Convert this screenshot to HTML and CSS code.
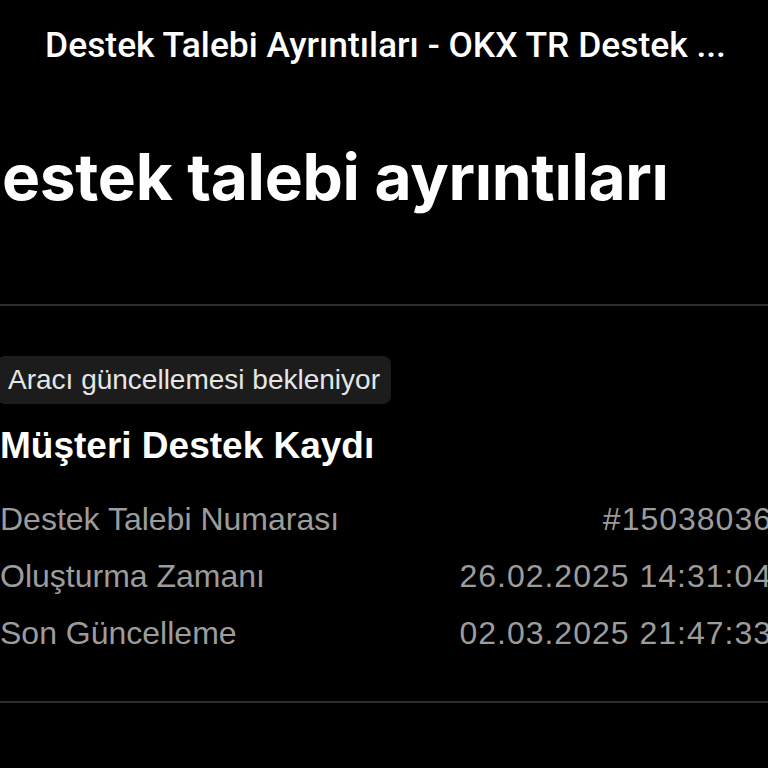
FILE: index.html
```html
<!DOCTYPE html>
<html lang="tr">
<head>
<meta charset="utf-8">
<link rel="stylesheet" href="styles.css">
</head>
<body>
<header class="topbar">
  <div class="topbar-title">Destek Talebi Ayrıntıları - OKX TR Destek ...</div>
</header>
<main class="page">
  <h1 class="page-title">Destek talebi ayrıntıları</h1>
  <hr class="divider">
  <section class="ticket">
    <div class="badge">Aracı güncellemesi bekleniyor</div>
    <h2 class="ticket-title">Müşteri Destek Kaydı</h2>
    <div class="rows">
      <div class="row"><span class="label">Destek Talebi Numarası</span><span class="value">#15038036</span></div>
      <div class="row"><span class="label">Oluşturma Zamanı</span><span class="value">26.02.2025 14:31:04</span></div>
      <div class="row"><span class="label">Son Güncelleme</span><span class="value">02.03.2025 21:47:33</span></div>
    </div>
  </section>
  <hr class="divider divider-bottom">
</main>
</body>
</html>
```
FILE: styles.css
```css
html, body {
  margin: 0;
  padding: 0;
  background: #000;
  overflow: hidden;
}
body {
  width: 768px;
  height: 768px;
  color: #fff;
  font-family: "Liberation Sans", Arial, sans-serif;
}
.topbar {
  height: 90px;
  display: flex;
  align-items: center;
  justify-content: center;
}
.topbar-title {
  font-family: Roboto, sans-serif;
  font-size: 35.4px;
  font-weight: 500;
  color: #fff;
  margin-left: 3px;
}
.page {
  width: 772px;
}
.page-title {
  margin: 47px 0 0 -44px;
  font-family: Inter, "Liberation Sans", sans-serif;
  font-weight: 700;
  font-size: 64px;
  line-height: 80px;
  letter-spacing: -0.3px;
  white-space: nowrap;
}
.divider {
  border: 0;
  height: 2px;
  background: #2e2e2e;
  margin: 87px 0 0 0;
}
.ticket {
  padding: 50px 0 0 0;
}
.badge {
  display: inline-block;
  background: #1c1c1c;
  border-radius: 8px;
  margin-left: -3px;
  padding: 0 11px 0 11px;
  height: 48px;
  line-height: 48px;
  font-size: 28px;
  color: #e6e6e6;
}
.ticket-title {
  margin: 19px 0 0 0;
  font-size: 37px;
  line-height: 46px;
  font-weight: 700;
}
.rows {
  margin-top: 33px;
  display: flex;
  flex-direction: column;
  gap: 23px;
}
.row {
  display: flex;
  justify-content: space-between;
  font-size: 32px;
  line-height: 34px;
  color: #9c9c9c;
  white-space: nowrap;
}
.value {
  letter-spacing: 1px;
}
.divider-bottom {
  margin-top: 51px;
}
```
